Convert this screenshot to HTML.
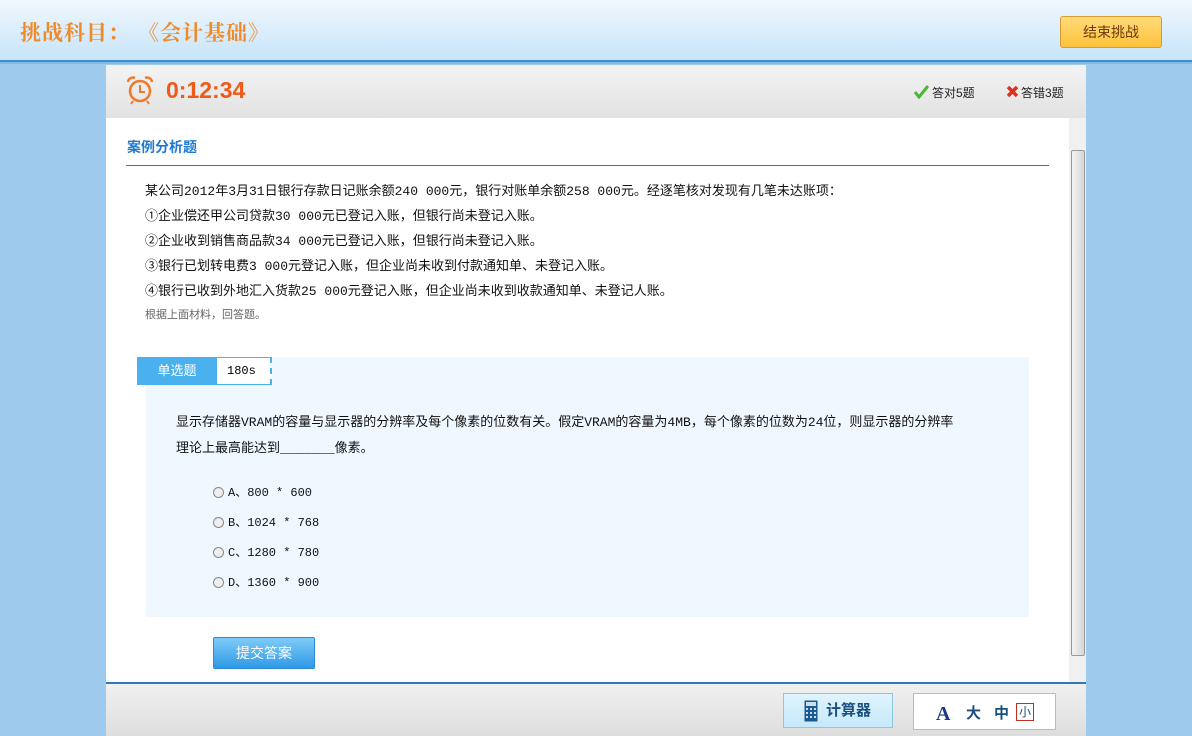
<!DOCTYPE html>
<html><head><meta charset="utf-8"><style>
*{margin:0;padding:0;box-sizing:border-box}
body{width:1192px;height:736px;overflow:hidden;background:#9ecaee;font-family:"Liberation Sans","Noto Sans CJK SC",sans-serif;position:relative}
.hdr{position:absolute;left:0;top:0;width:1192px;height:60px;background:linear-gradient(#f0f8fe,#c6e4f9)}
.l1{position:absolute;top:60px;left:0;width:1192px;height:2px;background:#3c8ccc}
.l2{position:absolute;top:62px;left:0;width:1192px;height:2px;background:#7fbde8}
.title{position:absolute;left:20px;top:17px;font-size:21px;font-weight:bold;color:#ef8a2a;font-family:"Noto Serif CJK SC",serif;letter-spacing:1px;white-space:nowrap}
.end{position:absolute;left:1060px;top:16px;width:102px;height:32px;border:1px solid #d99a2e;border-radius:3px;background:linear-gradient(#ffdb7a,#ffc23a);font-size:14px;color:#6a3a10;text-align:center;line-height:30px}
.panel{position:absolute;left:106px;top:65px;width:980px;height:671px;background:#fff}
.ph{position:absolute;left:0;top:0;width:980px;height:53px;background:linear-gradient(#f3f3f3,#e2e2e2)}
.timer{position:absolute;left:60px;top:12px;font-size:23px;font-weight:bold;color:#ee5a1a}
.stat{position:absolute;top:19px;font-size:12px;color:#222}
.sb{position:absolute;left:963px;top:53px;width:17px;height:564px;background:#f0f0f0}
.thumb{position:absolute;left:2px;top:32px;width:14px;height:506px;border:1px solid #999;border-radius:2px;background:linear-gradient(90deg,#f4f4f4,#d6d6d6)}
.foot{position:absolute;left:0;top:617px;width:980px;height:54px;background:linear-gradient(#f0f0f0,#dedede);border-top:2px solid #2e7ab8}
.sec{position:absolute;left:21px;top:72px;font-size:14px;font-weight:bold;color:#1e7ad0}
.uline{position:absolute;left:20px;top:100px;width:923px;height:1px;background:#2e7ab8}
.txt{position:absolute;left:39px;font-size:13px;color:#111;font-family:"Liberation Mono","Noto Sans CJK SC",monospace;white-space:nowrap}
.qbox{position:absolute;left:40px;top:292px;width:883px;height:260px;background:#eef8fe}
.tab{position:absolute;left:31px;top:292px;width:80px;height:28px;background:#4ab0ee;color:#fff;font-size:13px;line-height:28px;text-align:center}
.tab2{position:absolute;left:111px;top:292px;width:55px;height:28px;border:1px solid #4ab0ee;border-left:none;border-right:2px dashed #4ab0ee;background:#fff;font-size:12px;line-height:26px;padding-left:10px;font-family:"Liberation Mono",monospace}
.opt{position:absolute;left:107px;font-size:12px;color:#111;font-family:"Liberation Mono","Noto Sans CJK SC",monospace}
.opt i{display:inline-block;width:11px;height:11px;border:1px solid #888;border-radius:50%;background:#eee;vertical-align:-2px;margin-right:4px}
.sub{position:absolute;left:107px;top:572px;width:102px;height:32px;border:1px solid #2a8ad6;border-radius:2px;background:linear-gradient(#7ecbf8,#2f9ae6);color:#fff;font-size:14px;text-align:center;line-height:30px}
.calc{position:absolute;left:677px;top:628px;width:110px;height:35px;border:1px solid #8cc7df;background:linear-gradient(#e0f4fd,#c5e9fb);font-size:15px;font-weight:bold;color:#1a4f80;line-height:33px;padding-left:42px}
.fs{position:absolute;left:807px;top:628px;width:143px;height:37px;border:1px solid #bbb;background:#fff;font-size:15px;font-weight:bold;color:#1a4f80}
</style></head><body>
<div class="hdr"></div><div class="l1"></div><div class="l2"></div>
<div class="title">挑战科目<span style="display:inline-block;width:30px">：</span>《会计基础》</div>
<div class="end">结束挑战</div>
<div class="panel">
<div class="ph">
<svg style="position:absolute;left:19px;top:10px" width="30" height="30" viewBox="0 0 30 30"><circle cx="15" cy="16" r="10" fill="none" stroke="#ef7a2a" stroke-width="2.5"/><path d="M15 10v7h5" stroke="#ef7a2a" stroke-width="2" fill="none"/><path d="M3 7a5 5 0 0 1 7-4M27 7a5 5 0 0 0-7-4" stroke="#ef7a2a" stroke-width="2.5" fill="none"/><path d="M8 26l-2 3M22 26l2 3" stroke="#ef7a2a" stroke-width="2"/></svg>
<div class="timer">0:12:34</div>
<svg style="position:absolute;left:808px;top:20px" width="15" height="14"><path d="M1 7l4 5L14 1" stroke="#4cb33a" stroke-width="3" fill="none"/></svg>
<div class="stat" style="left:826px">答对5题</div>
<svg style="position:absolute;left:900px;top:20px" width="13" height="13"><path d="M2 2l9 9M11 2l-9 9" stroke="#e03020" stroke-width="3.5"/></svg>
<div class="stat" style="left:915px">答错3题</div>
</div>
<div class="sec">案例分析题</div>
<div class="uline"></div>
<div class="txt" style="top:115px">某公司2012年3月31日银行存款日记账余额240 000元，银行对账单余额258 000元。经逐笔核对发现有几笔未达账项：</div>
<div class="txt" style="top:140px">①企业偿还甲公司贷款30 000元已登记入账，但银行尚未登记入账。</div>
<div class="txt" style="top:165px">②企业收到销售商品款34 000元已登记入账，但银行尚未登记入账。</div>
<div class="txt" style="top:190px">③银行已划转电费3 000元登记入账，但企业尚未收到付款通知单、未登记入账。</div>
<div class="txt" style="top:215px">④银行已收到外地汇入货款25 000元登记入账，但企业尚未收到收款通知单、未登记人账。</div>
<div class="txt" style="top:241px;font-size:11px;color:#666">根据上面材料，回答题。</div>
<div class="qbox"></div>
<div class="tab">单选题</div><div class="tab2">180s</div>
<div class="txt" style="left:70px;top:346px">显示存储器VRAM的容量与显示器的分辨率及每个像素的位数有关。假定VRAM的容量为4MB，每个像素的位数为24位，则显示器的分辨率</div>
<div class="txt" style="left:70px;top:372px">理论上最高能达到_______像素。</div>
<div class="opt" style="top:418px"><i></i>A、800 * 600</div>
<div class="opt" style="top:448px"><i></i>B、1024 * 768</div>
<div class="opt" style="top:478px"><i></i>C、1280 * 780</div>
<div class="opt" style="top:508px"><i></i>D、1360 * 900</div>
<div class="sub">提交答案</div>
<div class="sb"><div class="thumb"></div></div>
<div class="foot"></div>
<div class="calc"><svg style="position:absolute;left:20px;top:6px" width="14" height="22"><rect x="0.5" y="0.5" width="13" height="21" fill="#1a5a90"/><rect x="2" y="2" width="10" height="4" fill="#cde"/><g fill="#cde"><rect x="2" y="8" width="2" height="2"/><rect x="6" y="8" width="2" height="2"/><rect x="10" y="8" width="2" height="2"/><rect x="2" y="12" width="2" height="2"/><rect x="6" y="12" width="2" height="2"/><rect x="10" y="12" width="2" height="2"/><rect x="2" y="16" width="2" height="2"/><rect x="6" y="16" width="2" height="2"/><rect x="10" y="16" width="2" height="2"/></g></svg>计算器</div>
<div class="fs">
<span style="position:absolute;left:22px;top:9px;font-family:'Liberation Serif',serif;font-size:20px;color:#1a3a80">A</span>
<span style="position:absolute;left:52px;top:8px">大</span>
<span style="position:absolute;left:80px;top:8px">中</span>
<span style="position:absolute;left:102px;top:9px;border:1px solid #c03020;font-size:12px;width:18px;height:18px;text-align:center;line-height:16px;font-weight:normal">小</span>
</div>
</div>
</body></html>
